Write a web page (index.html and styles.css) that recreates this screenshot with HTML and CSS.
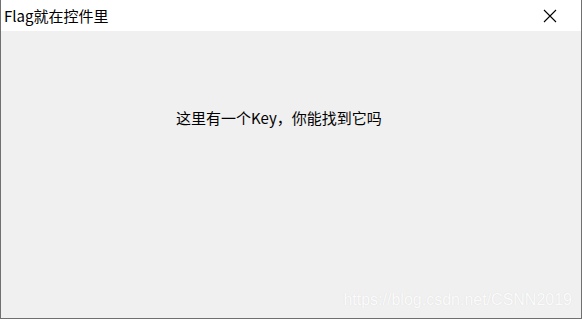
FILE: index.html
```html
<!DOCTYPE html>
<html>
<head>
<meta charset="utf-8">
<link rel="stylesheet" href="styles.css">
</head>
<body>
<div class="window">
  <div class="titlebar">
    <span class="title">Flag就在控件里</span>
    <span class="close"><svg width="14" height="14" viewBox="0 0 14 14"><path d="M1 1L13 13M13 1L1 13" stroke="#000" stroke-width="1.1" fill="none"/></svg></span>
  </div>
  <div class="client">
    <div class="label">这里有一个Key，你能找到它吗</div>
    <div class="watermark">https://blog.csdn.net/CSNN2019</div>
  </div>
</div>
</body>
</html>
```
FILE: styles.css
```css
html, body { margin: 0; padding: 0; }
body { width: 582px; height: 319px; overflow: hidden; font-family: "Noto Sans CJK SC", "Noto Sans", sans-serif; }
.window { box-sizing: border-box; width: 582px; height: 319px; border: 1px solid #707070; border-top: none; display: flex; flex-direction: column; background: #f0f0f0; }
.titlebar { height: 31px; background: #fff; display: flex; align-items: center; justify-content: space-between; padding-left: 3px; }
.title { font-size: 15px; color: #000; line-height: 31px; }
.close { width: 46px; height: 31px; display: flex; align-items: center; justify-content: center; margin-right: 8px; }
.client { flex: 1; display: flex; flex-direction: column; }
.label { margin: 77px 0 0 175px; font-size: 15px; line-height: 20px; color: #000; }
.watermark { margin-top: auto; margin-bottom: 9px; align-self: flex-end; margin-right: 9px; font-family: "Liberation Sans", Arial, sans-serif; font-size: 16px; color: #fbfbfb; text-shadow: 0 0 1px #d8d8d8; }
```
